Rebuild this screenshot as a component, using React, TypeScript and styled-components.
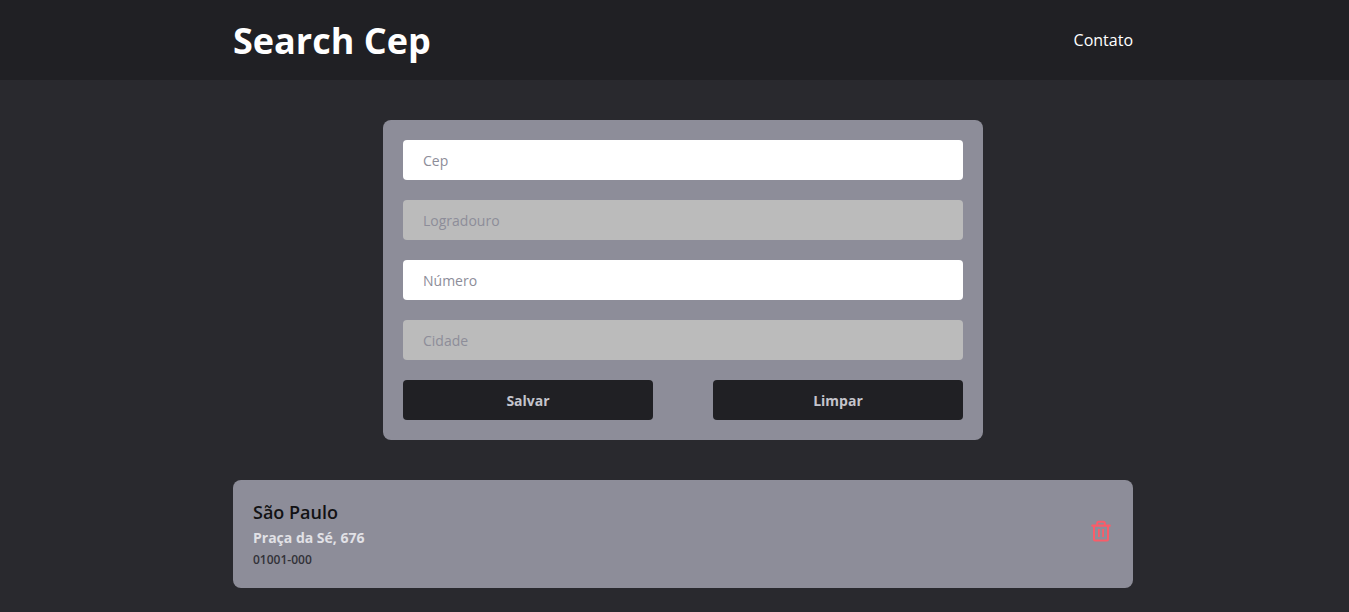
import React, { useState } from "react";
import styled, { createGlobalStyle } from "styled-components";

const GlobalStyle = createGlobalStyle`
  * {
    margin: 0;
    padding: 0;
    box-sizing: border-box;
  }
  body {
    background: #29292e;
    color: #ffffff;
    font-family: "Open Sans", sans-serif;
    font-size: 16px;
  }
  input, button {
    font-family: inherit;
  }
`;

const Header = styled.header`
  background: #202024;
  padding-left: 17px;
`;

const HeaderContent = styled.div`
  display: flex;
  align-items: center;
  justify-content: space-between;
  width: 100%;
  max-width: 900px;
  height: 80px;
  margin: 0 auto;
`;

const Title = styled.h1`
  font-size: 36px;
  font-weight: 700;
`;

const NavLink = styled.a`
  color: #ffffff;
  font-size: 16px;
  text-decoration: none;
`;

const Main = styled.main`
  display: flex;
  flex-direction: column;
  align-items: center;
  gap: 40px;
  padding: 40px 0 24px 17px;
`;

const Form = styled.form`
  display: flex;
  flex-direction: column;
  gap: 20px;
  width: 100%;
  max-width: 600px;
  padding: 20px;
  border-radius: 8px;
  background: #8d8d99;
`;

const Input = styled.input`
  width: 100%;
  height: 40px;
  padding: 0 20px;
  border: 0;
  border-radius: 4px;
  background: #ffffff;
  color: #202024;
  font-size: 14px;

  &::placeholder {
    color: #8d8d99;
  }
  &:disabled {
    background: #bbbbbb;
  }
`;

const Actions = styled.div`
  display: flex;
  gap: 60px;
`;

const ActionButton = styled.button`
  flex: 1;
  height: 40px;
  border: 0;
  border-radius: 4px;
  background: #202024;
  color: #c4c4cc;
  font-size: 14px;
  font-weight: 700;
  cursor: pointer;
`;

const AddressList = styled.ul`
  width: 100%;
  max-width: 900px;
  list-style: none;
`;

const AddressCard = styled.li`
  display: flex;
  align-items: center;
  justify-content: space-between;
  padding: 20px;
  border-radius: 8px;
  background: #8d8d99;
`;

const City = styled.h2`
  color: #121214;
  font-size: 18px;
  font-weight: 600;
  line-height: 24px;
`;

const Street = styled.p`
  color: #e1e1e6;
  font-size: 14px;
  font-weight: 700;
  line-height: 28px;
`;

const Code = styled.p`
  color: #323238;
  font-size: 12px;
  font-weight: 600;
  line-height: 16px;
`;

const RemoveButton = styled.button`
  border: 0;
  background: transparent;
  color: #fa5c69;
  font-size: 14px;
  cursor: pointer;
`;

const TrashIcon = () => (
  <svg
    width="24"
    height="24"
    viewBox="0 0 24 24"
    fill="none"
    stroke="currentColor"
    strokeWidth="2"
    strokeLinecap="round"
    strokeLinejoin="round"
    aria-hidden="true"
  >
    <path d="M3.3 5.7H20.7" strokeWidth="2.2" />
    <path d="M5 6v13.6a.9.9 0 0 0 .9.9h12.2a.9.9 0 0 0 .9-.9V6" />
    <path d="M8.2 5V3.2a1.5 1.5 0 0 1 1.5-1.5h4.6a1.5 1.5 0 0 1 1.5 1.5V5" />
    <path d="M9.9 9v8M14.1 9v8" strokeWidth="1.8" strokeLinecap="butt" />
  </svg>
);

const fields = [
  { id: "cep", label: "Cep", disabled: false },
  { id: "logradouro", label: "Logradouro", disabled: true },
  { id: "numero", label: "Número", disabled: false },
  { id: "cidade", label: "Cidade", disabled: true },
];

export default function App() {
  const [addresses, setAddresses] = useState([
    { city: "São Paulo", street: "Praça da Sé", number: "676", cep: "01001-000" },
  ]);

  return (
    <>
      <GlobalStyle />
      <Header>
        <HeaderContent>
          <Title>Search Cep</Title>
          <NavLink href="#contato">Contato</NavLink>
        </HeaderContent>
      </Header>
      <Main>
        <Form onSubmit={(event) => event.preventDefault()}>
          {fields.map(({ id, label, disabled }) => (
            <Input key={id} id={id} name={id} placeholder={label} aria-label={label} disabled={disabled} />
          ))}
          <Actions>
            <ActionButton type="submit">Salvar</ActionButton>
            <ActionButton type="reset">Limpar</ActionButton>
          </Actions>
        </Form>
        <AddressList>
          {addresses.map((item) => (
            <AddressCard key={item.cep}>
              <div>
                <City>{item.city}</City>
                <Street>{`${item.street}, ${item.number}`}</Street>
                <Code>{item.cep}</Code>
              </div>
              <RemoveButton
                type="button"
                aria-label="Remover"
                onClick={() => setAddresses(addresses.filter((other) => other !== item))}
              >
                <TrashIcon />
              </RemoveButton>
            </AddressCard>
          ))}
        </AddressList>
      </Main>
    </>
  );
}
